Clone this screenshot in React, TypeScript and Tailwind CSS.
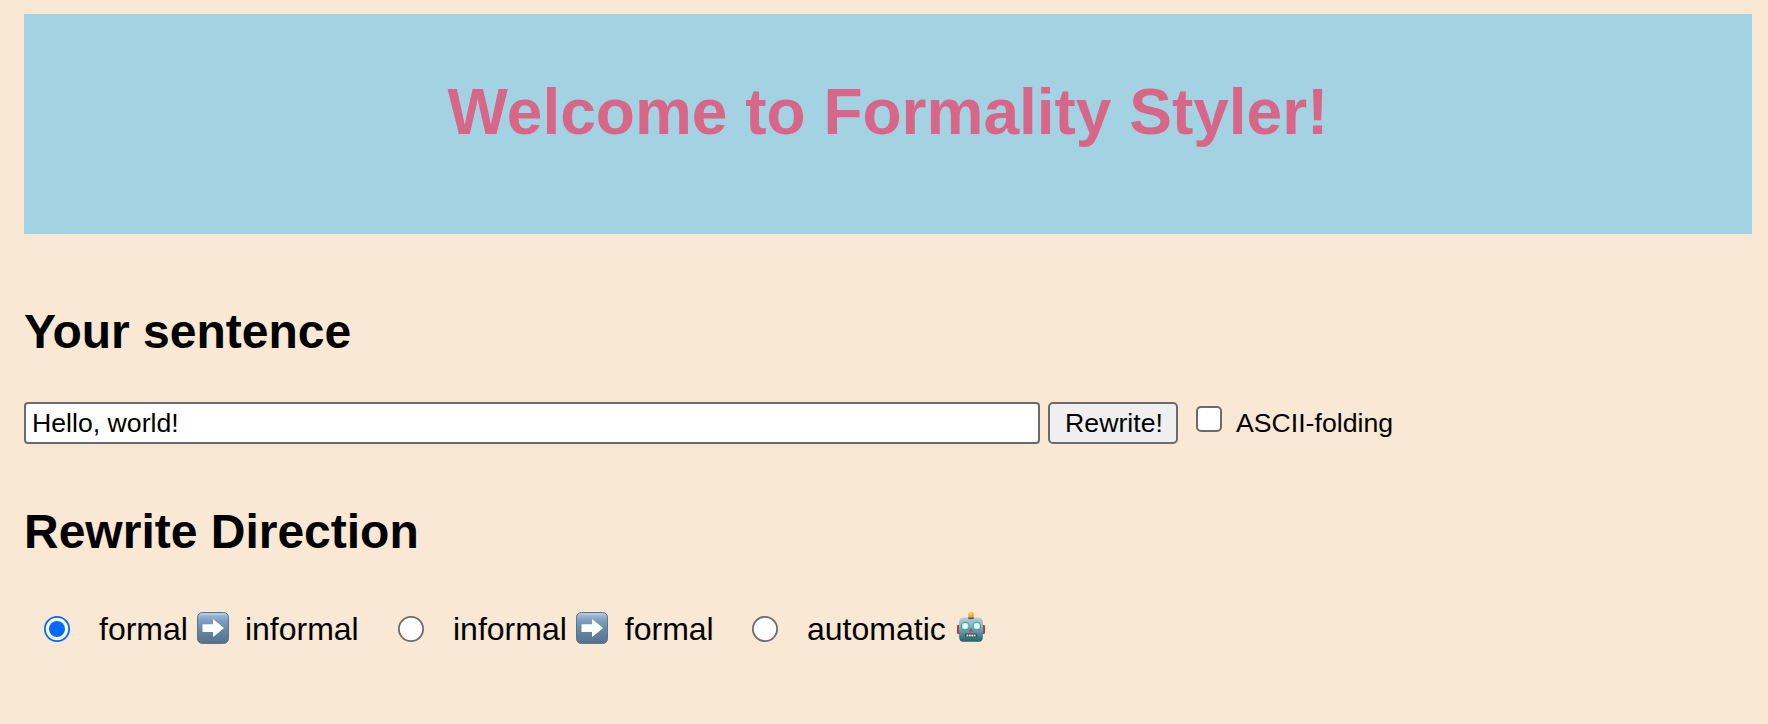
import { useState, type ReactNode } from "react";

function ArrowEmoji() {
  return (
    <svg viewBox="0 0 32 32" className="mb-[2px] ml-[9px] h-8 w-8 shrink-0" aria-hidden="true">
      <defs>
        <linearGradient id="tile" x1="0" y1="0" x2="0" y2="1">
          <stop offset="0" stopColor="#b4cbe0" />
          <stop offset="0.12" stopColor="#96b3ce" />
          <stop offset="0.3" stopColor="#7a9abb" />
          <stop offset="0.6" stopColor="#6485a6" />
          <stop offset="1" stopColor="#56708a" />
        </linearGradient>
      </defs>
      <rect x="0.5" y="0.5" width="31" height="31" rx="4.8" fill="url(#tile)" stroke="#587694" strokeWidth="1" />
      <path d="M4 2.2H28" stroke="#c3d6e6" strokeWidth="1" strokeLinecap="round" opacity="0.8" />
      <path d="M6 12.2H16V7.8Q16 7 16.8 7.7L26.5 15.5Q27 16 26.5 16.5L16.8 24.5Q16 25 16 24.2V20H6Q5.5 20 5.5 19.5V12.7Q5.5 12.2 6 12.2Z" fill="#fff" />
    </svg>
  );
}

function RobotEmoji() {
  return (
    <svg viewBox="0 0 28 30" className="mb-[4px] ml-[11px] h-[30px] w-7 shrink-0" aria-hidden="true">
      <defs>
        <linearGradient id="face" x1="0" y1="0" x2="0" y2="1">
          <stop offset="0" stopColor="#b9cfce" />
          <stop offset="0.35" stopColor="#8fb6b9" />
          <stop offset="0.7" stopColor="#4d8a93" />
          <stop offset="1" stopColor="#1c6470" />
        </linearGradient>
        <radialGradient id="bulb" cx="0.4" cy="0.3" r="0.8">
          <stop offset="0" stopColor="#ffd75e" />
          <stop offset="1" stopColor="#ee8a1d" />
        </radialGradient>
      </defs>
      <rect x="0" y="13" width="4" height="9" rx="1.2" fill="#b9343c" />
      <rect x="24" y="13" width="4" height="9" rx="1.2" fill="#b9343c" />
      <path d="M10.5 7Q10.5 4.5 14 4.5T17.5 7Z" fill="#5b5268" />
      <circle cx="14" cy="2.9" r="2.9" fill="url(#bulb)" />
      <path d="M5.5 5.8Q14 4.5 22.5 5.8Q25.5 6.4 25.9 10Q26.5 17 25.8 26Q25.5 29.5 22 29.7H6Q2.5 29.5 2.2 26Q1.5 17 2.1 10Q2.5 6.4 5.5 5.8Z" fill="url(#face)" />
      <path d="M11 5.5H17V6.5Q14 7.8 11 6.5Z" fill="#5b5268" />
      <circle cx="8.2" cy="14" r="4.3" fill="#239fc0" />
      <circle cx="19.8" cy="14" r="4.3" fill="#239fc0" />
      <circle cx="8.2" cy="14" r="3.3" fill="#b8f2fb" />
      <circle cx="19.8" cy="14" r="3.3" fill="#b8f2fb" />
      <circle cx="8.2" cy="14" r="2.2" fill="#fff" />
      <circle cx="19.8" cy="14" r="2.2" fill="#fff" />
      <path d="M14 15.2L16.2 19.5H11.8Z" fill="#d8393f" />
      <rect x="8" y="21.5" width="12" height="3.8" rx="1.3" fill="#3d4347" />
      <path d="M9.5 23.4H18.5" stroke="#f1ece5" strokeWidth="2" strokeDasharray="1.8 0.6" />
    </svg>
  );
}

function Radio({ checked, onSelect, className, children }: { checked: boolean; onSelect: () => void; className: string; children: ReactNode }) {
  return (
    <label className={className}>
      <input type="radio" name="direction" checked={checked} onChange={onSelect} className="sr-only" />
      <svg viewBox="0 0 26 26" className="mr-[29px] h-[26px] w-[26px] shrink-0" aria-hidden="true">
        <circle cx="13" cy="13" r="12.1" fill="#fff" stroke={checked ? "#0069ff" : "#6b6b6b"} strokeWidth="1.8" />
        {checked && <circle cx="13" cy="13" r="8" fill="#0069ff" />}
      </svg>
      {children}
    </label>
  );
}

export default function App() {
  const [direction, setDirection] = useState("informal");
  const [sentence, setSentence] = useState("Hello, world!");

  return (
    <main className="flex h-[724px] flex-col overflow-hidden bg-[#f9e8d4] pt-[14px] pr-4 pl-6 font-['Liberation_Sans',Arial,sans-serif] text-black">
      <header className="h-[220px] shrink-0 bg-[#a3d2e2] pt-[62px] text-center">
        <h1 className="text-[64px] leading-[72px] font-bold text-[#d86688]">Welcome to Formality Styler!</h1>
      </header>

      <h2 className="mt-[71px] text-[48px] leading-[54px] font-bold">Your sentence</h2>
      <form className="mt-[43px] flex h-[42px] items-center text-[26.67px] leading-[30px]" onSubmit={(e) => e.preventDefault()}>
        <input
          type="text"
          aria-label="Your sentence"
          value={sentence}
          onChange={(e) => setSentence(e.target.value)}
          className="h-[42px] w-[1016px] rounded-[4px] border-2 border-[#6b6b6b] bg-white px-[6px] outline-none"
        />
        <button type="submit" className="ml-2 h-[42px] w-[130px] rounded-[5px] border-2 border-[#6b6b6b] bg-[#efefef] pl-[2px]">
          Rewrite!
        </button>
        <label className="flex items-center">
          <input type="checkbox" className="mr-[14px] mb-2 ml-[18px] h-[26px] w-[26px] appearance-none rounded-[5px] border-2 border-[#6b6b6b] bg-white" />
          ASCII-folding
        </label>
      </form>

      <h2 className="mt-[61px] text-[48px] leading-[54px] font-bold">Rewrite Direction</h2>
      <div className="mt-[52px] flex h-9 items-center pl-5 text-[32px] leading-9">
        <Radio checked={direction === "informal"} onSelect={() => setDirection("informal")} className="relative flex w-[354px] items-center">
          <span>formal</span>
          <ArrowEmoji />
          <span className="ml-[16px]">informal</span>
        </Radio>
        <Radio checked={direction === "formal"} onSelect={() => setDirection("formal")} className="relative flex w-[354px] items-center">
          <span>informal</span>
          <ArrowEmoji />
          <span className="ml-[17px]">formal</span>
        </Radio>
        <Radio checked={direction === "automatic"} onSelect={() => setDirection("automatic")} className="relative flex items-center">
          <span>automatic</span>
          <RobotEmoji />
        </Radio>
      </div>
    </main>
  );
}
